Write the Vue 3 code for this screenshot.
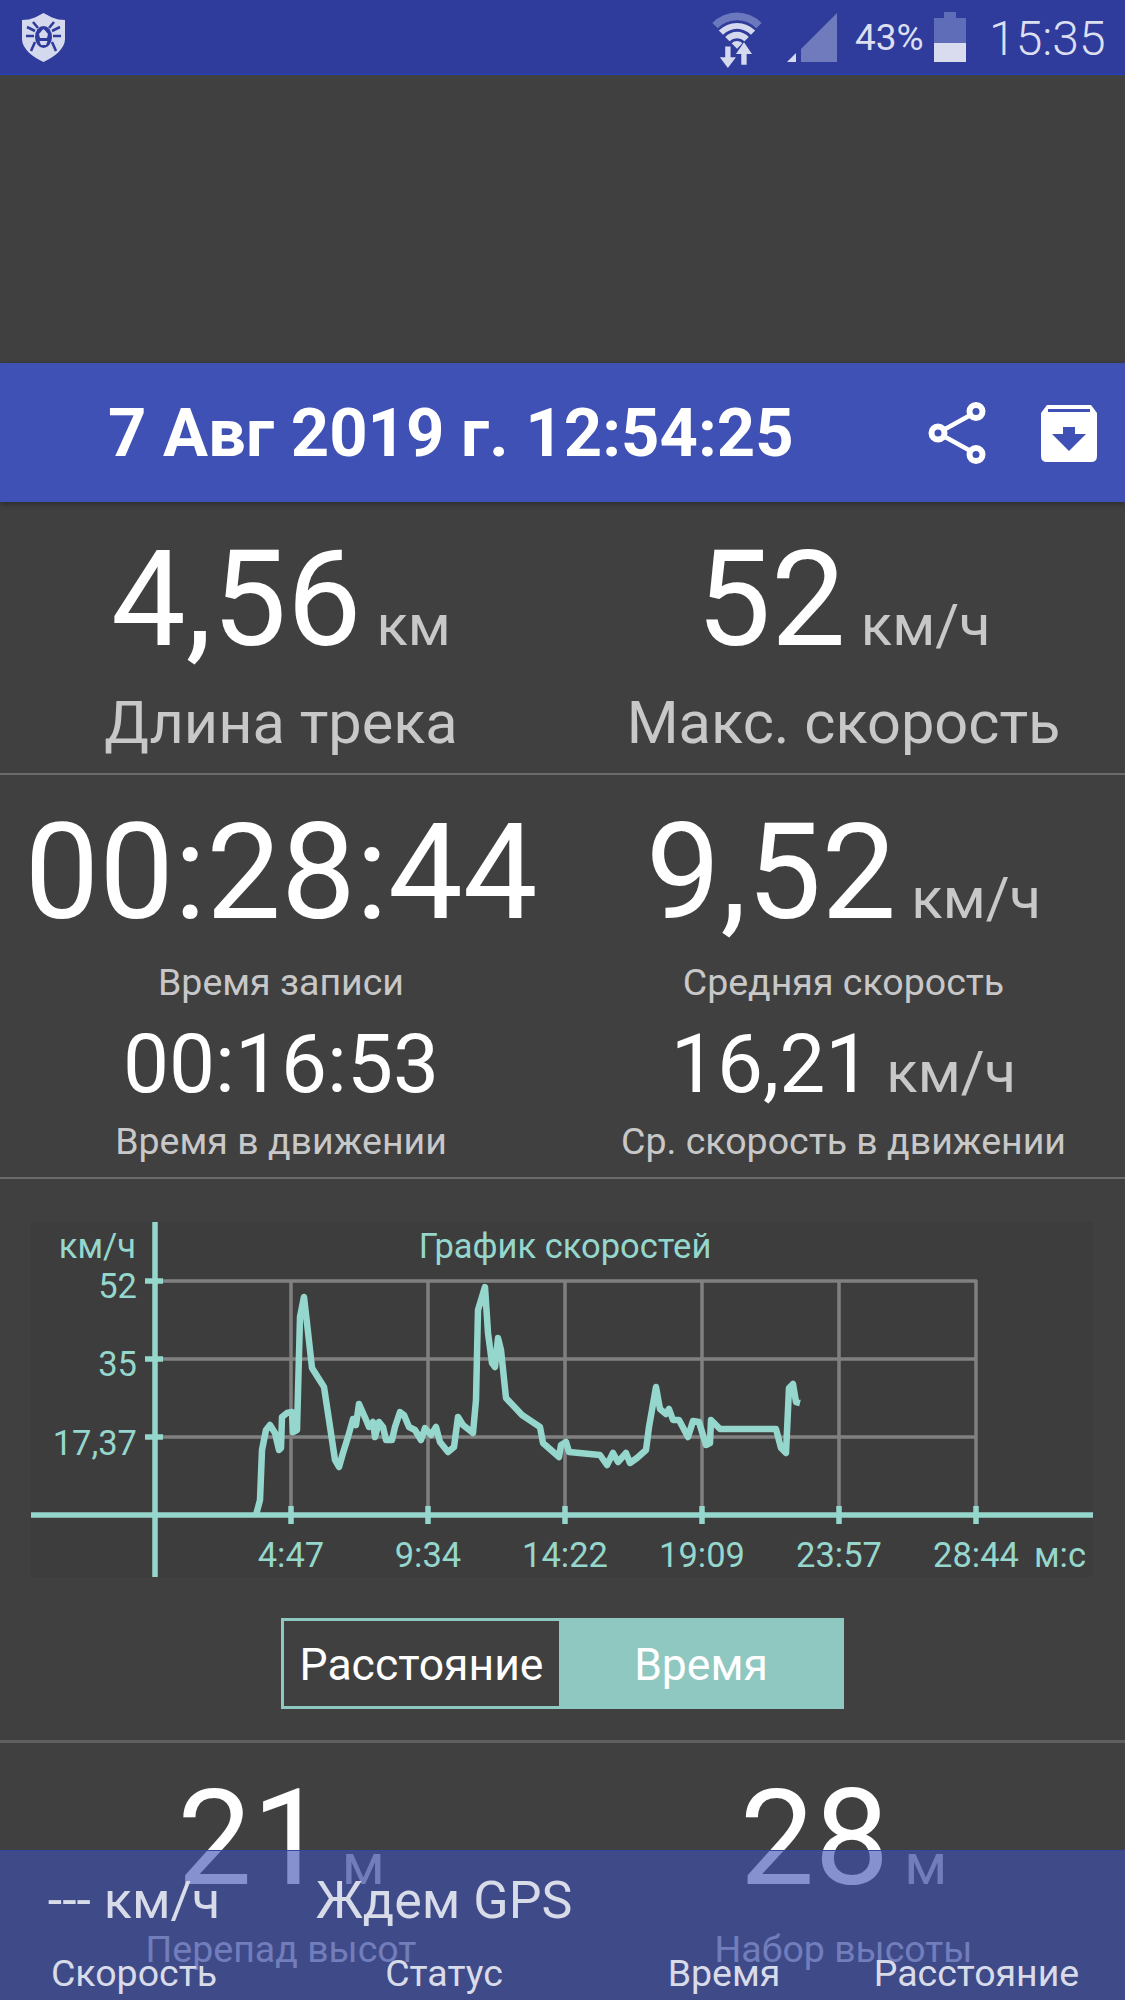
<template>
  <div class="screen">
    <div class="status-bar">
      <svg class="logo" width="43" height="49" viewBox="0 0 43 49">
        <path d="M21.5 0 L30 4.500 Q36 7 43 7 V26 C43 36 32 44 21.5 49 C11 44 0 36 0 26 V7 Q7 7 13 4.500 Z" fill="#d5d9ee" />
        <g fill="none" stroke="#2f3c9c" stroke-width="2.6">
          <path d="M16 15 L11 9 M27 15 L32 9 M13 18 L5 14 M30 18 L38 14 M12 23 L4 23 M31 23 L39 23 M13 29 L9 38 M30 29 L34 38" />
        </g>
        <ellipse cx="21.5" cy="24" rx="8.500" ry="11" fill="#2f3c9c" />
        <path d="M17 21 L19.5 18 L21.5 16 L23.5 18 L26 21 L25 25 L18 25 Z" fill="#d5d9ee" />
        <path d="M17.500 28 H25.500 L24 32 H19 Z" fill="#d5d9ee" />
      </svg>
      <svg class="wifi" width="56" height="60" viewBox="0 0 52 56">
        <path d="M3 14 A32 32 0 0 1 49 14 L44 19 A25 25 0 0 0 8 19 Z" fill="#6b78bd" />
        <path d="M9 21 A24 24 0 0 1 43 21 L39 25 A18 18 0 0 0 13 25 Z" fill="#d5d9ee" />
        <path d="M15 27 A15 15 0 0 1 37 27 L33 31 A10 10 0 0 0 19 31 Z" fill="#d5d9ee" />
        <path d="M21 33 A7 7 0 0 1 31 33 L26 38 Z" fill="#d5d9ee" />
        <path d="M15 40 H20 V50 H25 L17.5 60 L10 50 H15 Z" fill="#d5d9ee" transform="translate(0 -4)" />
        <path d="M30 54 H35 V44 H40 L32.500 33 L25 44 H30 Z" fill="#d5d9ee" transform="translate(0 -1)" />
      </svg>
      <svg class="signal" width="50" height="49" viewBox="0 0 50 49">
        <path d="M14 49 V36 L50 0 V49 Z" fill="#6f7bbd" />
        <path d="M0 49 L9 40 V49 Z" fill="#d5d9ee" />
      </svg>
      <span class="percent">43%</span>
      <div class="battery">
        <div class="battery-nub"></div>
        <div class="battery-empty"></div>
        <div class="battery-level"></div>
      </div>
      <span class="clock">15:35</span>
    </div>

    <div class="ad-space"></div>

    <div class="title-bar">
      <span class="title">7 Авг 2019 г. 12:54:25</span>
      <svg class="share" width="60" height="62" viewBox="0 0 60 62">
        <path d="M49 10 L11 31 L49 52" fill="none" stroke="#fff" stroke-width="4.500" />
        <circle cx="49" cy="9.500" r="6.500" fill="#3f51b5" stroke="#fff" stroke-width="6" />
        <circle cx="11" cy="31" r="6.500" fill="#3f51b5" stroke="#fff" stroke-width="6" />
        <circle cx="49" cy="52.500" r="6.500" fill="#3f51b5" stroke="#fff" stroke-width="6" />
      </svg>
      <svg class="archive" width="58" height="58" viewBox="0 0 58 58">
        <path d="M7 1 H51 L57 9 V52 Q57 58 51 58 H7 Q1 58 1 52 V9 Z" fill="#fff" />
        <rect x="8" y="5" width="42" height="3" fill="#3f51b5" />
        <path d="M23 23 H35 V30 H46 L29 47 L12 30 H23 Z" fill="#3f51b5" />
      </svg>
    </div>

    <div class="stats row-one">
      <div class="cell" v-for="s in topStats" :key="s.label">
        <div class="value-line">
          <span class="big">{{ s.value }}</span><span class="unit" v-if="s.unit">{{ s.unit }}</span>
        </div>
        <div class="label">{{ s.label }}</div>
      </div>
    </div>

    <div class="stats row-two">
      <div class="cell" v-for="s in timeStats" :key="s.label">
        <div class="value-line">
          <span class="big">{{ s.value }}</span><span class="unit" v-if="s.unit">{{ s.unit }}</span>
        </div>
        <div class="small-label">{{ s.label }}</div>
      </div>
      <div class="cell second" v-for="s in movingStats" :key="s.label">
        <div class="value-line">
          <span class="mid">{{ s.value }}</span><span class="mid-unit" v-if="s.unit">{{ s.unit }}</span>
        </div>
        <div class="small-label moving-label">{{ s.label }}</div>
      </div>
    </div>

    <div class="chart-section">
      <svg class="chart" width="1062" height="355" viewBox="0 0 1062 355">
        <line v-for="y in gridY" :key="'h' + y" :x1="124" :x2="946" :y1="y" :y2="y" class="grid" />
        <line v-for="t in ticksX" :key="'v' + t.x" :x1="t.x" :x2="t.x" y1="58" y2="293" class="grid" />

        <line x1="124" x2="124" y1="0" y2="355" class="axis" />
        <line x1="0" x2="1062" y1="293" y2="293" class="axis" />
        <line v-for="y in gridY" :key="'ty' + y" x1="114" x2="132" :y1="y" :y2="y" class="axis" />
        <line v-for="t in ticksX" :key="'tx' + t.x" :x1="t.x" :x2="t.x" y1="284" y2="302" class="axis" />

        <polyline :points="curve" class="curve" />

        <text x="105" y="36" text-anchor="end">км/ч</text>
        <text x="534" y="36" text-anchor="middle">График скоростей</text>
        <text x="106" y="76" text-anchor="end">52</text>
        <text x="106" y="154" text-anchor="end">35</text>
        <text x="106" y="233" text-anchor="end">17,37</text>
        <text v-for="t in ticksX" :key="t.label" :x="t.x" y="345" text-anchor="middle">{{ t.label }}</text>
        <text x="1003" y="345">м:с</text>
      </svg>

      <div class="toggle">
        <div class="toggle-off">Расстояние</div>
        <div class="toggle-on">Время</div>
      </div>
    </div>

    <div class="stats row-four">
      <div class="cell" v-for="s in heightStats" :key="s.label">
        <div class="value-line">
          <span class="big">{{ s.value }}</span><span class="unit">{{ s.unit }}</span>
        </div>
        <div class="height-label">{{ s.label }}</div>
      </div>
    </div>

    <div class="bottom-bar">
      <div class="bar-col" v-for="c in barCols" :key="c.label">
        <div class="bar-value">{{ c.value }}</div>
        <div class="bar-label">{{ c.label }}</div>
      </div>
    </div>
  </div>
</template>

<script setup>
import { computed } from "vue";

const topStats = [
  { value: "4,56", unit: "км", label: "Длина трека" },
  { value: "52", unit: "км/ч", label: "Макс. скорость" },
];
const timeStats = [
  { value: "00:28:44", label: "Время записи" },
  { value: "9,52", unit: "км/ч", label: "Средняя скорость" },
];
const movingStats = [
  { value: "00:16:53", label: "Время в движении" },
  { value: "16,21", unit: "км/ч", label: "Ср. скорость в движении" },
];
const heightStats = [
  { value: "21", unit: "м", label: "Перепад высот" },
  { value: "28", unit: "м", label: "Набор высоты" },
];
const barCols = [
  { value: "--- км/ч", label: "Скорость" },
  { value: "Ждем GPS", label: "Статус" },
  { value: "", label: "Время" },
  { value: "", label: "Расстояние" },
];

const gridY = [59, 137, 215];
const ticksX = [
  { x: 260, label: "4:47" },
  { x: 397, label: "9:34" },
  { x: 534, label: "14:22" },
  { x: 671, label: "19:09" },
  { x: 808, label: "23:57" },
  { x: 945, label: "28:44" },
];

// speed track, x in px from the left of the chart, y in px from the top
const track = [
  [225, 293], [229, 278], [231, 228], [235, 208], [239, 203], [244, 211], [248, 228], [250, 226],
  [251, 195], [256, 191], [261, 190], [262, 210], [266, 208], [269, 95], [273, 75], [276, 101],
  [281, 146], [293, 165], [298, 198], [304, 238], [308, 245], [312, 231], [317, 215], [322, 197],
  [325, 203], [328, 182], [336, 200], [338, 205], [342, 200], [344, 215], [348, 200], [352, 205],
  [355, 218], [361, 218], [364, 205], [369, 190], [373, 193], [378, 205], [384, 208], [390, 218],
  [394, 206], [400, 213], [405, 205], [409, 220], [417, 230], [423, 225], [427, 195], [432, 203],
  [442, 211], [445, 178], [447, 88], [454, 65], [457, 111], [461, 141], [464, 145], [467, 116],
  [470, 128], [475, 176], [491, 193], [509, 205], [512, 221], [528, 235], [530, 223], [535, 220],
  [538, 230], [569, 233], [576, 243], [582, 231], [587, 240], [595, 231], [599, 241], [606, 236],
  [615, 228], [618, 205], [625, 165], [629, 187], [635, 192], [638, 187], [642, 198], [648, 198],
  [657, 215], [662, 199], [668, 200], [675, 223], [679, 221], [680, 198], [689, 207], [745, 207],
  [750, 226], [755, 231], [758, 166], [762, 162], [765, 180], [769, 181],
];
const curve = computed(() => track.map((p) => p.join(",")).join(" "));
</script>

<style>
html,
body {
  background: #404040;
}
</style>

<style scoped>
.screen {
  position: relative;
  width: 1125px;
  height: 2000px;
  overflow: hidden;
  background: #404040;
  color: #fff;
  font-family: Roboto, "Noto Sans", sans-serif;
}

.status-bar {
  box-sizing: border-box;
  height: 75px;
  display: flex;
  align-items: flex-start;
  background: #2f3c9c;
  border-bottom: 1px solid #2440c0;
  color: #dcdff0;
}
.logo {
  margin: 13px 0 0 22px;
}
.wifi {
  margin: 8px 0 0 644px;
}
.signal {
  margin: 13px 0 0 22px;
}
.percent {
  width: 68px;
  margin: 17px 0 0 18px;
  font-size: 37px;
  line-height: 42px;
}
.battery {
  width: 32px;
  height: 50px;
  margin: 12px 0 0 11px;
  display: flex;
  flex-direction: column;
  align-items: center;
}
.battery-nub {
  width: 12px;
  height: 6px;
  background: #5f6db8;
}
.battery-empty {
  width: 32px;
  height: 25px;
  background: #5f6db8;
}
.battery-level {
  width: 32px;
  height: 19px;
  background: #d9dcef;
}
.clock {
  margin: 12px 0 0 23px;
  font-size: 48px;
  line-height: 54px;
  font-weight: 300;
}

.ad-space {
  height: 288px;
}

.title-bar {
  position: relative;
  height: 139px;
  display: flex;
  align-items: center;
  background: #3f51b5;
  box-shadow: 0 2px 6px rgba(0, 0, 0, 0.35);
}
.title {
  width: 810px;
  margin-left: 108px;
  font-size: 67px;
  font-weight: 700;
  white-space: nowrap;
}
.share {
  margin-left: 9px;
}
.archive {
  margin-left: 53px;
}

.stats {
  display: grid;
  grid-template-columns: 562px 563px;
  border-bottom: 2px solid #6a6a6a;
}
.row-one {
  height: 248px;
  padding-top: 23px;
}
.row-two {
  height: 379px;
  padding-top: 23px;
  grid-template-rows: 221px 158px;
}
.row-four {
  padding-top: 21px;
  border-bottom: none;
}
.cell {
  display: flex;
  flex-direction: column;
  align-items: center;
  white-space: nowrap;
}
.value-line {
  display: flex;
  align-items: baseline;
}
.big {
  font-size: 133px;
  line-height: 150px;
}
.unit {
  margin-left: 15px;
  font-size: 58px;
  color: #c8c8c8;
}
.label {
  margin-top: 15px;
  font-size: 59.500px;
  line-height: 66px;
  color: #c8c8c8;
}
.small-label {
  margin-top: 13px;
  font-size: 37.500px;
  line-height: 42px;
  color: #c8c8c8;
}
.moving-label {
  margin-top: 11px;
}
.mid {
  font-size: 82px;
  line-height: 90px;
}
.mid-unit {
  margin-left: 15px;
  font-size: 58px;
  color: #c8c8c8;
}
.height-label {
  margin-top: 14px;
  font-size: 37.500px;
  line-height: 42px;
  color: #c8c8c8;
}

.chart-section {
  height: 564px;
  box-sizing: border-box;
  padding: 43px 32px 0 31px;
  border-bottom: 3px solid #5f5f5f;
}
.chart {
  display: block;
  background: #3d3d3d;
}
.chart text {
  font-family: Roboto, "Noto Sans", sans-serif;
  font-size: 34.500px;
  fill: #96d7cd;
}
.grid {
  stroke: #808080;
  stroke-width: 3.500;
}
.axis {
  stroke: #96d7cd;
  stroke-width: 5.500;
}
.curve {
  fill: none;
  stroke: #96d7cd;
  stroke-width: 6.500;
  stroke-linejoin: round;
}

.toggle {
  box-sizing: border-box;
  width: 563px;
  height: 91px;
  margin: 41px 0 0 250px;
  display: flex;
  border: 3px solid #8fc8c1;
  font-size: 44.500px;
}
.toggle-off {
  width: 275px;
  padding-top: 2px;
  box-sizing: border-box;
  display: flex;
  align-items: center;
  justify-content: center;
  background: #404040;
}
.toggle-on {
  flex: 1;
  padding: 2px 0 0 2px;
  display: flex;
  align-items: center;
  justify-content: center;
  background: #8fc8c1;
}

.bottom-bar {
  position: absolute;
  left: 0;
  right: 0;
  bottom: 0;
  height: 150px;
  display: grid;
  grid-template-columns: 268px 352px 208px 297px;
  background: rgba(63, 81, 181, 0.63);
  border-top: 1px solid #33479f;
  box-sizing: border-box;
}
.bar-col {
  display: flex;
  flex-direction: column;
  align-items: center;
  color: #d8dbe8;
}
.bar-value {
  height: 99px;
  padding-top: 22px;
  box-sizing: border-box;
  font-size: 52px;
  line-height: 56px;
}
.bar-label {
  font-size: 37.500px;
  line-height: 46px;
}
</style>
